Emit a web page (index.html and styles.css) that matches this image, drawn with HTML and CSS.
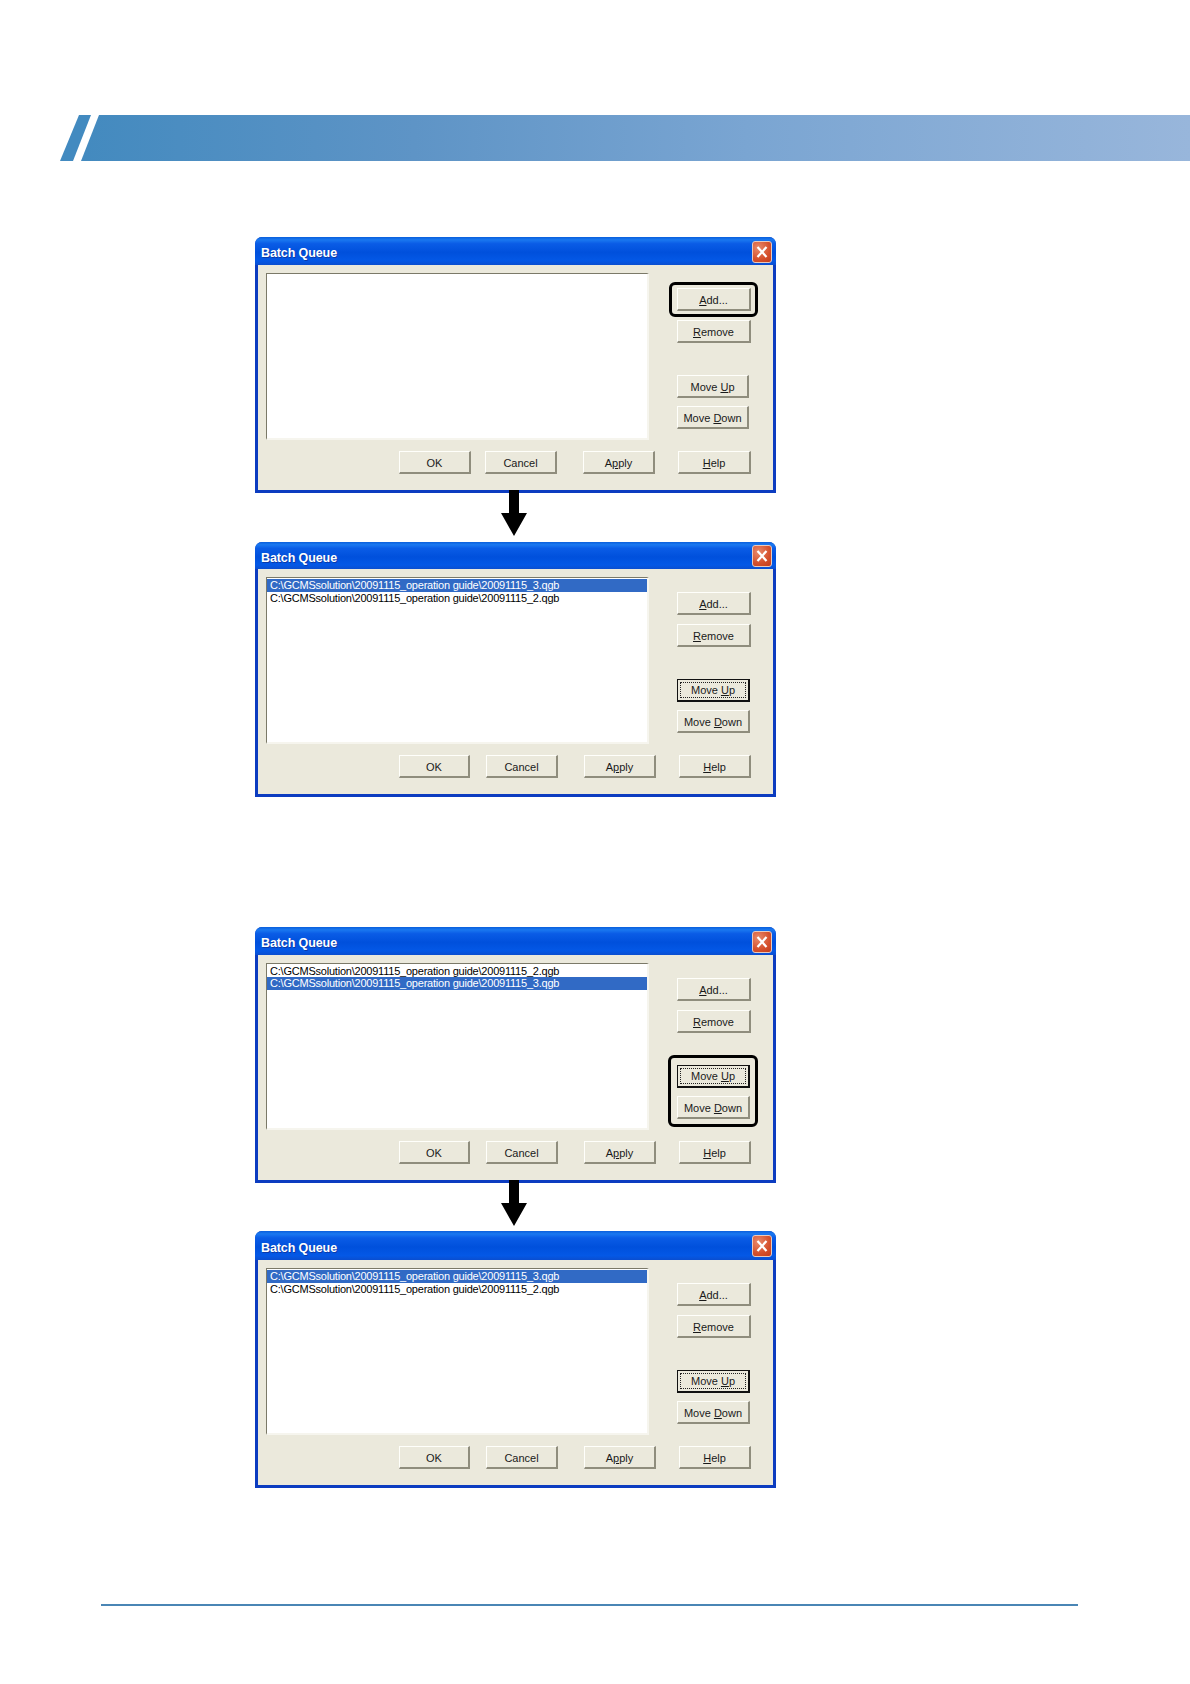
FILE: index.html
```html
<!DOCTYPE html>
<html lang="en">
<head>
<meta charset="utf-8">
<title>Batch Queue</title>
<link rel="stylesheet" href="styles.css">
</head>
<body>
<div class="banner"><div class="banner-slash"></div><div class="banner-bar"></div></div>

<main class="stack">
  <section class="dialog dialog--first">
    <header class="titlebar"><span class="title">Batch Queue</span><span class="close"><svg viewBox="0 0 20 22" width="20" height="22"><path d="M5.5 6 14.5 16M14.5 6 5.5 16" stroke="#fff" stroke-width="2.2" fill="none"/></svg></span></header>
    <div class="client">
      <div class="panes">
        <div class="list"></div>
        <div class="side">
          <div class="group">
            <div class="marked marked--add"><span class="btn btn-wide"><u>A</u>dd...</span></div>
            <span class="btn btn-wide"><u>R</u>emove</span>
          </div>
          <div class="group group--move">
            <span class="btn btn-move">Move <u>U</u>p</span>
            <span class="btn btn-move">Move <u>D</u>own</span>
          </div>
        </div>
      </div>
      <div class="actions">
        <span class="btn btn-ok">OK</span><span class="btn btn-cancel">Cancel</span><span class="btn btn-apply">A<u>p</u>ply</span><span class="btn btn-help"><u>H</u>elp</span>
      </div>
    </div>
  </section>

  <div class="arrow"><svg viewBox="0 0 26 46" width="26" height="46"><path d="M8 0H18V23H26L13 46 0 23H8Z" fill="#000"/></svg></div>

  <section class="dialog dialog--short">
    <header class="titlebar"><span class="title">Batch Queue</span><span class="close"><svg viewBox="0 0 20 22" width="20" height="22"><path d="M5.5 6 14.5 16M14.5 6 5.5 16" stroke="#fff" stroke-width="2.2" fill="none"/></svg></span></header>
    <div class="client">
      <div class="panes">
        <div class="list">
          <div class="item item--selected">C:\GCMSsolution\20091115_operation guide\20091115_3.qgb</div>
          <div class="item">C:\GCMSsolution\20091115_operation guide\20091115_2.qgb</div>
        </div>
        <div class="side">
          <div class="group">
            <span class="btn btn-wide"><u>A</u>dd...</span>
            <span class="btn btn-wide"><u>R</u>emove</span>
          </div>
          <div class="group group--move">
            <span class="btn btn-move btn--focus"><span class="focus-ring">Move <u>U</u>p</span></span>
            <span class="btn btn-move">Move <u>D</u>own</span>
          </div>
        </div>
      </div>
      <div class="actions">
        <span class="btn btn-ok">OK</span><span class="btn btn-cancel">Cancel</span><span class="btn btn-apply">A<u>p</u>ply</span><span class="btn btn-help"><u>H</u>elp</span>
      </div>
    </div>
  </section>

  <section class="dialog dialog--gap">
    <header class="titlebar"><span class="title">Batch Queue</span><span class="close"><svg viewBox="0 0 20 22" width="20" height="22"><path d="M5.5 6 14.5 16M14.5 6 5.5 16" stroke="#fff" stroke-width="2.2" fill="none"/></svg></span></header>
    <div class="client">
      <div class="panes">
        <div class="list">
          <div class="item">C:\GCMSsolution\20091115_operation guide\20091115_2.qgb</div>
          <div class="item item--selected">C:\GCMSsolution\20091115_operation guide\20091115_3.qgb</div>
        </div>
        <div class="side">
          <div class="group">
            <span class="btn btn-wide"><u>A</u>dd...</span>
            <span class="btn btn-wide"><u>R</u>emove</span>
          </div>
          <div class="group group--move marked marked--move">
            <span class="btn btn-move btn--focus"><span class="focus-ring">Move <u>U</u>p</span></span>
            <span class="btn btn-move">Move <u>D</u>own</span>
          </div>
        </div>
      </div>
      <div class="actions">
        <span class="btn btn-ok">OK</span><span class="btn btn-cancel">Cancel</span><span class="btn btn-apply">A<u>p</u>ply</span><span class="btn btn-help"><u>H</u>elp</span>
      </div>
    </div>
  </section>

  <div class="arrow"><svg viewBox="0 0 26 46" width="26" height="46"><path d="M8 0H18V23H26L13 46 0 23H8Z" fill="#000"/></svg></div>

  <section class="dialog dialog--tall">
    <header class="titlebar"><span class="title">Batch Queue</span><span class="close"><svg viewBox="0 0 20 22" width="20" height="22"><path d="M5.5 6 14.5 16M14.5 6 5.5 16" stroke="#fff" stroke-width="2.2" fill="none"/></svg></span></header>
    <div class="client">
      <div class="panes">
        <div class="list">
          <div class="item item--selected">C:\GCMSsolution\20091115_operation guide\20091115_3.qgb</div>
          <div class="item">C:\GCMSsolution\20091115_operation guide\20091115_2.qgb</div>
        </div>
        <div class="side">
          <div class="group">
            <span class="btn btn-wide"><u>A</u>dd...</span>
            <span class="btn btn-wide"><u>R</u>emove</span>
          </div>
          <div class="group group--move">
            <span class="btn btn-move btn--focus"><span class="focus-ring">Move <u>U</u>p</span></span>
            <span class="btn btn-move">Move <u>D</u>own</span>
          </div>
        </div>
      </div>
      <div class="actions">
        <span class="btn btn-ok">OK</span><span class="btn btn-cancel">Cancel</span><span class="btn btn-apply">A<u>p</u>ply</span><span class="btn btn-help"><u>H</u>elp</span>
      </div>
    </div>
  </section>
</main>

<div class="rule"></div>
</body>
</html>
```

FILE: styles.css
```css
* { box-sizing: border-box; }

html, body { margin: 0; padding: 0; }

body {
  background: #fff;
  height: 1684px;
  overflow: hidden;
  font-family: "Liberation Sans", Arial, sans-serif;
  padding-top: 115px;
}

.banner {
  display: flex;
  height: 46px;
  margin-left: 60px;
}

.banner-slash {
  width: 31px;
  background: #428ac0;
  clip-path: polygon(19px 0, 100% 0, 13px 100%, 0 100%);
}

.banner-bar {
  flex: 1;
  margin-left: -10px;
  background: linear-gradient(90deg, #438abf 0%, #5e94c6 30%, #7aa5d2 60%, #98b6db 100%);
  clip-path: polygon(18px 0, 100% 0, 100% 100%, 0 100%);
}

.stack {
  margin: 76px 0 0 255px;
  width: 521px;
}

.dialog {
  width: 521px;
  border-radius: 7px 7px 0 0;
  background: #0c3cc0;
  padding: 0 3px 3px;
  display: flex;
  flex-direction: column;
}

.dialog--gap { margin-top: 130px; }
.dialog--tall { margin-top: -1px; }

.titlebar {
  height: 28px;
  margin: 0 -3px;
  padding: 0 4px 0 6px;
  border-radius: 7px 7px 0 0;
  background: linear-gradient(180deg, #0a5fdc 0%, #1a78f0 10%, #0a5ce6 24%, #0050dc 55%, #0458e6 85%, #0a4ed0 100%);
  display: flex;
  align-items: center;
  justify-content: space-between;
}

.dialog--short .titlebar { height: 27px; }
.dialog--tall .titlebar { height: 29px; }

.title {
  color: #fff;
  font-size: 12.5px;
  font-weight: 700;
  letter-spacing: -0.1px;
  text-shadow: 1px 1px 0 #0b3aa8;
  padding-top: 4px;
}

.close {
  width: 20px;
  height: 22px;
  margin-top: 1px;
  border: 1px solid #e9c9bc;
  border-radius: 3px;
  background: radial-gradient(circle at 30% 30%, #e88a6c, #d5502c 60%, #c23c1c);
  display: flex;
  align-items: center;
  justify-content: center;
  overflow: hidden;
}

.close svg { flex: none; }

.client {
  background: #ebe9dc;
  padding: 8px 8px 16px;
}

.panes { display: flex; }

.list {
  width: 383px;
  height: 167px;
  padding-top: 1px;
  background: #fff;
  border-style: solid;
  border-width: 1px 2px 2px 1px;
  border-color: #7b7968 #f6f5ee #f6f5ee #7b7968;
  font-size: 11px;
  line-height: 13px;
  color: #000;
}

.item {
  height: 12px;
  padding-left: 3px;
  white-space: pre;
  letter-spacing: -0.22px;
}

.item--selected {
  height: 13px;
  background: #316ac5;
  color: #fff;
}

.side {
  margin-left: 28px;
  padding-top: 15px;
  display: flex;
  flex-direction: column;
}

.group {
  display: flex;
  flex-direction: column;
  gap: 9px;
}

.group--move {
  margin-top: 32px;
  gap: 8px;
}

.btn {
  display: block;
  height: 23px;
  padding-top: 1px;
  background: #ebe9dc;
  border-style: solid;
  border-width: 1px 2px 2px 1px;
  border-color: #fffffb #8f8d7d #8f8d7d #fffffb;
  font-size: 11px;
  line-height: 20px;
  text-align: center;
  color: #1a1a1a;
  white-space: nowrap;
}

.btn-wide { width: 74px; }
.btn-move { width: 73px; }
.dialog--first .btn-move { width: 72px; }

.btn--focus {
  border-color: #111;
  padding: 2px;
}

.focus-ring {
  display: block;
  height: 100%;
  line-height: 15px;
  border: 1px dotted #222;
}

.marked { position: relative; }

.marked::after {
  content: "";
  position: absolute;
  border: 3px solid #000;
  border-radius: 6px;
  pointer-events: none;
}

.marked--add::after { inset: -6px -7px -6px -8px; }
.marked--move::after { inset: -10px -7px -8px -9px; }

.actions {
  display: flex;
  margin-top: 11px;
  padding-left: 133px;
}

.btn-ok { width: 71px; }
.btn-cancel { width: 72px; margin-left: 16px; }
.btn-apply { width: 72px; margin-left: 26px; }
.btn-help { width: 72px; margin-left: 23px; }

.dialog--first .btn-ok { width: 72px; }
.dialog--first .btn-cancel { margin-left: 14px; }
.dialog--first .btn-help { width: 73px; }

.arrow {
  height: 52px;
  margin: -3px 0 0 246px;
  position: relative;
  z-index: 1;
  line-height: 0;
}

.rule {
  margin: 116px 0 0 101px;
  width: 977px;
  height: 2px;
  background: #4a86b5;
}
```
